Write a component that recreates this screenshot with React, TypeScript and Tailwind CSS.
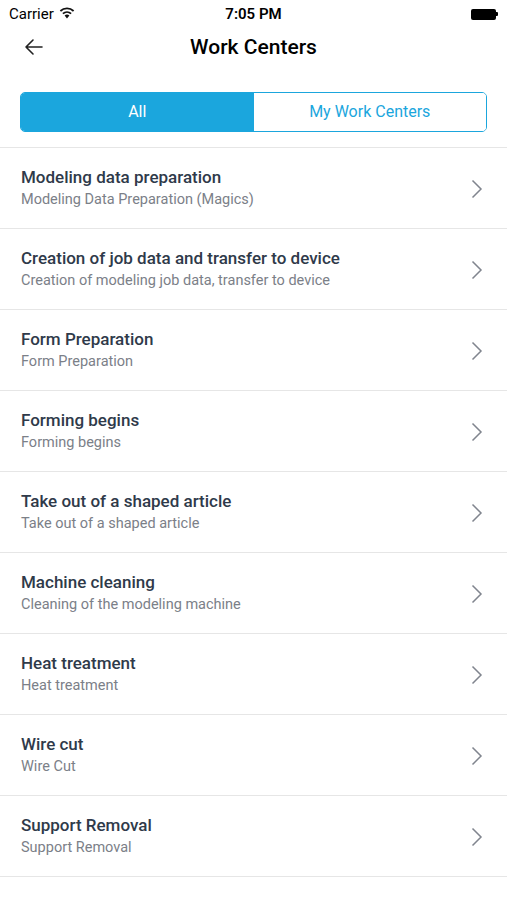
interface WorkCenter {
    title: string;
    subtitle: string;
}

const centers: WorkCenter[] = [
    { title: 'Modeling data preparation', subtitle: 'Modeling Data Preparation (Magics)' },
    { title: 'Creation of job data and transfer to device', subtitle: 'Creation of modeling job data, transfer to device' },
    { title: 'Form Preparation', subtitle: 'Form Preparation' },
    { title: 'Forming begins', subtitle: 'Forming begins' },
    { title: 'Take out of a shaped article', subtitle: 'Take out of a shaped article' },
    { title: 'Machine cleaning', subtitle: 'Cleaning of the modeling machine' },
    { title: 'Heat treatment', subtitle: 'Heat treatment' },
    { title: 'Wire cut', subtitle: 'Wire Cut' },
    { title: 'Support Removal', subtitle: 'Support Removal' },
    { title: 'Additive finishing', subtitle: 'Additive finishing' },
];

function StatusBar() {
    return (
        <div className="flex h-[28px] items-center justify-between px-[9px] text-black">
            <div className="flex w-[120px] items-center gap-[5px] text-[15px]">
                <span>Carrier</span>
                <svg width="16" height="12" viewBox="0 0 16 12" className="mt-[-2px]">
                    <path d="M8 11.5 L5.6 8.6 A3.6 3.6 0 0 1 10.4 8.6 Z" fill="#111" />
                    <path d="M3.9 6.6 A6.2 6.2 0 0 1 12.1 6.6" stroke="#111" strokeWidth="1.8" fill="none" />
                    <path d="M1.4 4 A9.8 9.8 0 0 1 14.6 4" stroke="#111" strokeWidth="1.8" fill="none" />
                </svg>
            </div>
            <span className="text-[15px] font-semibold">7:05 PM</span>
            <div className="flex w-[120px] justify-end">
                <div className="flex items-center">
                    <div className="h-[11px] w-[25px] rounded-[2px] bg-black" />
                    <div className="h-[4px] w-[2px] rounded-r-[1px] bg-black" />
                </div>
            </div>
        </div>
    );
}

function Row({ item }: { item: WorkCenter }) {
    return (
        <div className="flex h-[81px] items-center border-b border-[#e6e6e6] pl-[21px] pr-[24px]">
            <div className="flex min-w-0 flex-1 flex-col pt-[1px]">
                <span className="text-[17px] font-medium leading-[23px] text-[#2f3a4a]">{item.title}</span>
                <span className="text-[14.5px] leading-[22px] text-[#7b8088]">{item.subtitle}</span>
            </div>
            <svg width="12" height="20" viewBox="0 0 12 20" className="mt-[1px]">
                <path d="M1.5 1.5 L10 10 L1.5 18.5" stroke="#80858e" strokeWidth="1.5" fill="none" />
            </svg>
        </div>
    );
}

export default function App() {
    return (
        <div className="h-[900px] overflow-hidden bg-white font-['Roboto',sans-serif]">
            <StatusBar />
            <div className="relative flex h-[38px] items-center justify-center">
                <svg width="20" height="18" viewBox="0 0 20 18" className="absolute left-[24px]">
                    <path d="M18 9 H2 M9 2 L2 9 L9 16" stroke="#222" strokeWidth="1.6" fill="none" strokeLinecap="round" strokeLinejoin="round" />
                </svg>
                <h1 className="mt-[2px] text-[21px] font-medium text-black">Work Centers</h1>
            </div>
            <div className="px-[20px] pt-[26px] pb-[15px]">
                <div className="flex h-[40px] overflow-hidden rounded-[5px] border-[1.5px] border-[#1ba6dd] text-[16px]">
                    <button className="flex-1 bg-[#1ba6dd] text-white">All</button>
                    <button className="flex-1 bg-white text-[#1ba6dd]">My Work Centers</button>
                </div>
            </div>
            <div className="border-t border-[#e6e6e6]">
                {centers.map((item, i) => (
                    <Row key={i} item={item} />
                ))}
            </div>
        </div>
    );
}
